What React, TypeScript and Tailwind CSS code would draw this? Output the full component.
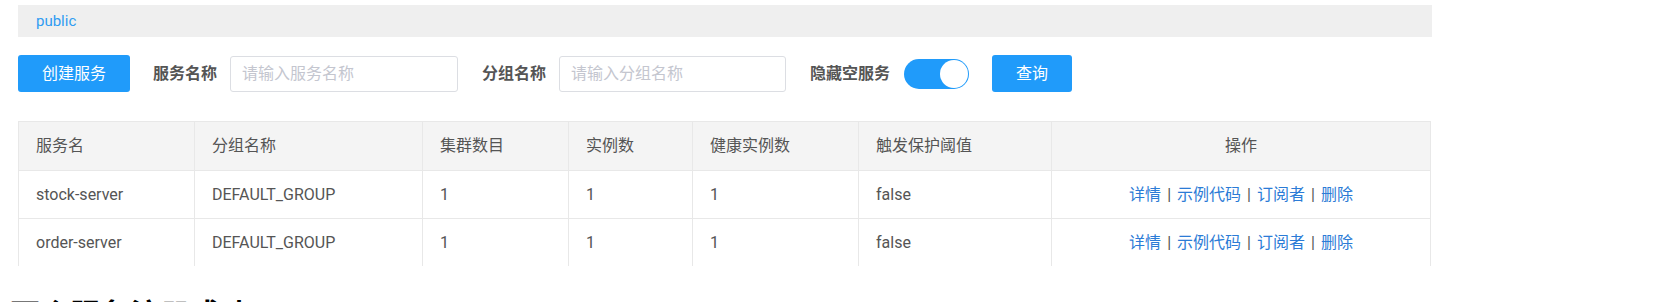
import React from "react";

const cols = [
  { w: "w-[176px]", label: "服务名" },
  { w: "w-[228px]", label: "分组名称" },
  { w: "w-[146px]", label: "集群数目" },
  { w: "w-[124px]", label: "实例数" },
  { w: "w-[166px]", label: "健康实例数" },
  { w: "w-[193px]", label: "触发保护阈值" },
];

const rows = [
  ["stock-server", "DEFAULT_GROUP", "1", "1", "1", "false"],
  ["order-server", "DEFAULT_GROUP", "1", "1", "1", "false"],
];

function Actions() {
  return (
    <div className="flex items-center justify-center text-[#2b7bd6]">
      <span>详情</span>
      <span className="mx-[6px] text-[#555]">|</span>
      <span>示例代码</span>
      <span className="mx-[6px] text-[#555]">|</span>
      <span>订阅者</span>
      <span className="mx-[6px] text-[#555]">|</span>
      <span>删除</span>
    </div>
  );
}

export default function App() {
  return (
    <div className="w-[1664px] h-[302px] overflow-hidden bg-white font-['Roboto','Noto_Sans_CJK_SC',sans-serif] text-[16px]">
      <div className="pt-[5px] pl-[18px]">
        <div className="w-[1414px] h-[32px] bg-[#efefef] flex items-center pl-[18px] text-[#2f9cf2] text-[15px]">
          public
        </div>

        <div className="mt-[18px] flex items-center h-[37px]">
          <button className="w-[112px] h-[37px] bg-[#209bfa] text-white rounded-[3px] text-[16px]">
            创建服务
          </button>
          <span className="ml-[23px] font-bold text-[#555] text-[16px]">服务名称</span>
          <input
            className="ml-[13px] w-[228px] h-[36px] border border-[#dcdee3] rounded-[3px] px-[11px] text-[16px] placeholder:text-[#c4c6cf] outline-none"
            placeholder="请输入服务名称"
          />
          <span className="ml-[24px] font-bold text-[#555] text-[16px]">分组名称</span>
          <input
            className="ml-[13px] w-[227px] h-[36px] border border-[#dcdee3] rounded-[3px] px-[11px] text-[16px] placeholder:text-[#c4c6cf] outline-none"
            placeholder="请输入分组名称"
          />
          <span className="ml-[24px] font-bold text-[#555] text-[16px]">隐藏空服务</span>
          <div className="ml-[14px] w-[65px] h-[30px] rounded-full bg-[#209bfa] flex items-center justify-end pr-[1px]">
            <div className="w-[28px] h-[28px] rounded-full bg-white" />
          </div>
          <button className="ml-[23px] w-[80px] h-[37px] bg-[#209bfa] text-white rounded-[3px] text-[16px]">
            查询
          </button>
        </div>

        <div className="mt-[29px] w-[1413px] h-[145px] overflow-hidden">
          <div className="flex h-[50px] bg-[#f4f4f4] border-t border-b border-l border-[#e8e8e8] text-[#555]">
            {cols.map((c) => (
              <div key={c.label} className={`${c.w} shrink-0 border-r border-[#e8e8e8] flex items-center pl-[17px]`}>
                {c.label}
              </div>
            ))}
            <div className="flex-1 border-r border-[#e8e8e8] flex items-center justify-center">操作</div>
          </div>
          {rows.map((r, i) => (
            <div key={i} className="flex h-[48px] border-b border-l border-[#e8e8e8] text-[#555]">
              {r.map((v, j) => (
                <div key={j} className={`${cols[j].w} shrink-0 border-r border-[#e8e8e8] flex items-center pl-[17px]`}>
                  {v}
                </div>
              ))}
              <div className="flex-1 border-r border-[#e8e8e8] flex items-center justify-center">
                <Actions />
              </div>
            </div>
          ))}
        </div>
      </div>

      <div className="mt-[31px] pl-[10px] text-[30px] leading-none font-bold text-black font-['Noto_Sans_CJK_SC',sans-serif]">
        两个服务注册成功
      </div>
    </div>
  );
}
